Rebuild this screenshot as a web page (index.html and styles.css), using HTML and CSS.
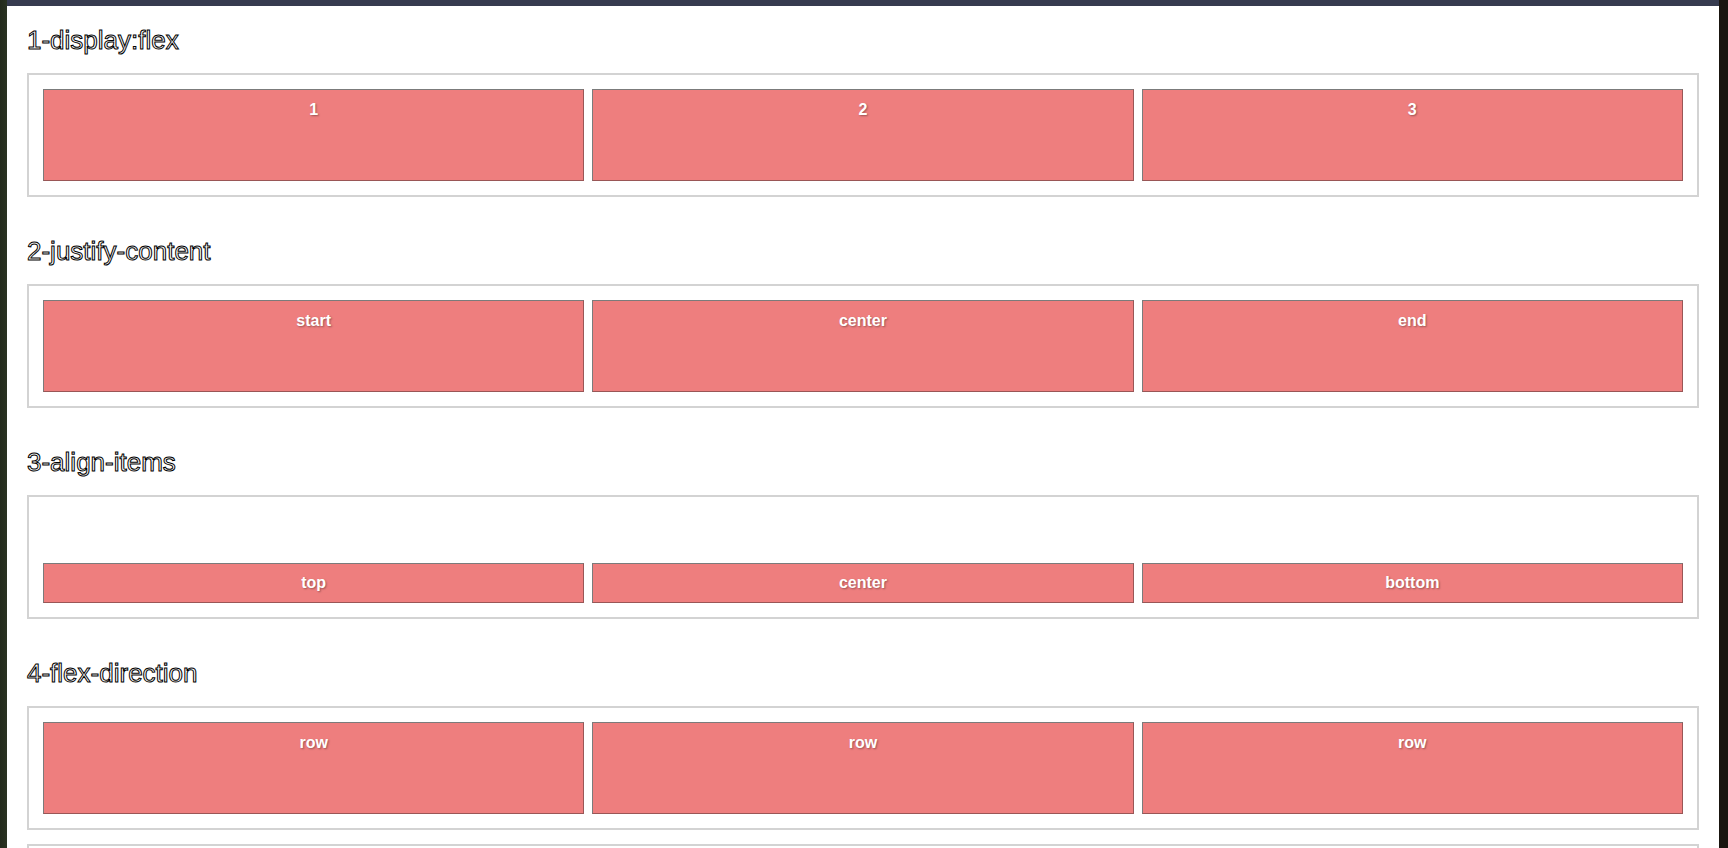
FILE: index.html
```html
<!DOCTYPE html>
<html lang="en">
<head>
<meta charset="utf-8">
<title>Flex demo</title>
<link rel="stylesheet" href="styles.css">
</head>
<body>
<div class="window">
  <section class="section">
    <h2 class="title">1-display:flex</h2>
    <div class="box">
      <div class="item">1</div>
      <div class="item">2</div>
      <div class="item">3</div>
    </div>
  </section>
  <section class="section">
    <h2 class="title">2-justify-content</h2>
    <div class="box">
      <div class="item">start</div>
      <div class="item">center</div>
      <div class="item">end</div>
    </div>
  </section>
  <section class="section">
    <h2 class="title">3-align-items</h2>
    <div class="box box-align">
      <div class="item item-short">top</div>
      <div class="item item-short">center</div>
      <div class="item item-short">bottom</div>
    </div>
  </section>
  <section class="section">
    <h2 class="title">4-flex-direction</h2>
    <div class="box">
      <div class="item">row</div>
      <div class="item">row</div>
      <div class="item">row</div>
    </div>
    <div class="box box-reverse">
      <div class="item">row-reverse</div>
      <div class="item">row-reverse</div>
      <div class="item">row-reverse</div>
    </div>
  </section>
</div>
</body>
</html>
```

FILE: styles.css
```css
html, body {
  margin: 0;
  height: 100%;
  overflow: hidden;
}

body {
  box-sizing: border-box;
  padding: 0 9px 0 7px;
  background: linear-gradient(to right, #232a1c 0, #2a3322 7px, #19150f 7px, #19150f 100%);
  font-family: "Liberation Sans", Arial, Helvetica, sans-serif;
}

.window {
  box-sizing: border-box;
  height: 100%;
  background: #ffffff;
  border-top: 6px solid #363b4f;
  padding: 19px 20px 0;
}

.section {
  padding-bottom: 25px;
}

.title {
  margin: 0 0 18px;
  font-size: 26px;
  line-height: 30px;
  font-weight: normal;
  color: #ffffff;
  -webkit-text-stroke: 1px #000000;
}

.box {
  display: flex;
  border: 2px solid #d3d3d3;
  padding: 10px;
  margin-bottom: 14px;
}

.box-align {
  height: 100px;
  align-items: flex-end;
}

.box-reverse {
  flex-direction: row-reverse;
}

.item {
  flex: 1;
  box-sizing: border-box;
  height: 92px;
  margin: 4px;
  padding-top: 11px;
  background: #ee7e7e;
  border: 1px solid;
  border-color: #7b7b7b #9a5656 #9a5656 #7b7b7b;
  color: #ffffff;
  font-size: 16px;
  font-weight: bold;
  line-height: 18px;
  text-align: center;
  text-shadow: 1px 1px 2px rgba(0, 0, 0, 0.35);
}

.item-short {
  height: 40px;
  padding-top: 0;
  line-height: 38px;
}
```
